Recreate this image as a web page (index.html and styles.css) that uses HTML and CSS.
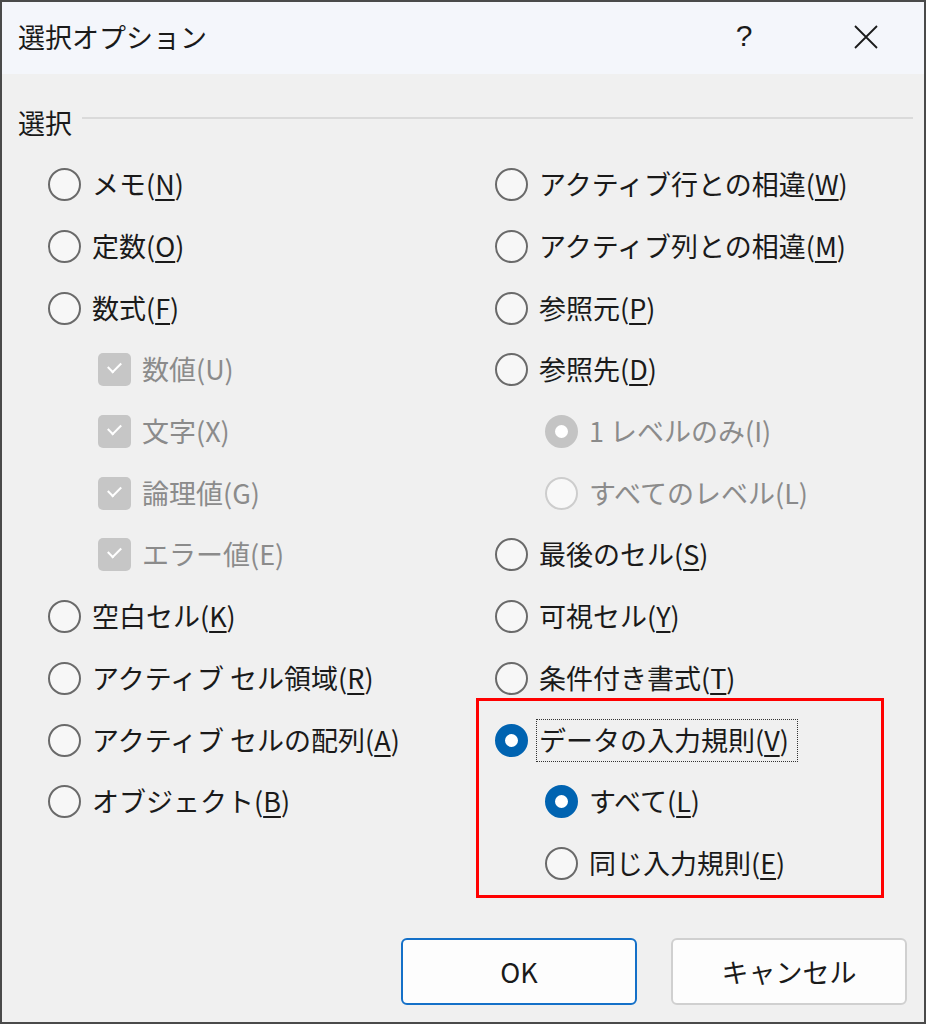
FILE: index.html
```html
<!DOCTYPE html>
<html lang="ja">
<head>
    <meta charset="UTF-8">
    <title>選択オプション</title>
    <link rel="stylesheet" href="styles.css">
</head>
<body>
    <div class="dialog">
        <!-- タイトルバー -->
        <div class="titlebar">
            <span class="title">選択オプション</span>
            <span class="tb-btn help">?</span>
            <span class="tb-btn close">
                <svg width="26" height="26" viewBox="0 0 26 26"><path d="M2 2 L24 24 M24 2 L2 24" stroke="#1a1a1a" stroke-width="1.8" fill="none"/></svg>
            </span>
        </div>

        <div class="content">
            <div class="group-head">
                <span>選択</span>
                <div class="group-line"></div>
            </div>

            <div class="columns">
                <div class="col">
                    <div class="row"><span class="radio"></span><span class="label">メモ(<u>N</u>)</span></div>
                    <div class="row"><span class="radio"></span><span class="label">定数(<u>O</u>)</span></div>
                    <div class="row"><span class="radio"></span><span class="label">数式(<u>F</u>)</span></div>
                    <div class="row sub disabled"><span class="check"></span><span class="label">数値(U)</span></div>
                    <div class="row sub disabled"><span class="check"></span><span class="label">文字(X)</span></div>
                    <div class="row sub disabled"><span class="check"></span><span class="label">論理値(G)</span></div>
                    <div class="row sub disabled"><span class="check"></span><span class="label">エラー値(E)</span></div>
                    <div class="row"><span class="radio"></span><span class="label">空白セル(<u>K</u>)</span></div>
                    <div class="row"><span class="radio"></span><span class="label">アクティブ セル領域(<u>R</u>)</span></div>
                    <div class="row"><span class="radio"></span><span class="label">アクティブ セルの配列(<u>A</u>)</span></div>
                    <div class="row"><span class="radio"></span><span class="label">オブジェクト(<u>B</u>)</span></div>
                </div>
                <div class="col">
                    <div class="row"><span class="radio"></span><span class="label">アクティブ行との相違(<u>W</u>)</span></div>
                    <div class="row"><span class="radio"></span><span class="label">アクティブ列との相違(<u>M</u>)</span></div>
                    <div class="row"><span class="radio"></span><span class="label">参照元(<u>P</u>)</span></div>
                    <div class="row"><span class="radio"></span><span class="label">参照先(<u>D</u>)</span></div>
                    <div class="row sub disabled"><span class="radio on"></span><span class="label">1 レベルのみ(I)</span></div>
                    <div class="row sub disabled"><span class="radio"></span><span class="label">すべてのレベル(L)</span></div>
                    <div class="row"><span class="radio"></span><span class="label">最後のセル(<u>S</u>)</span></div>
                    <div class="row"><span class="radio"></span><span class="label">可視セル(<u>Y</u>)</span></div>
                    <div class="row"><span class="radio"></span><span class="label">条件付き書式(<u>T</u>)</span></div>
                    <div class="highlight">
                        <div class="row"><span class="radio on"></span><span class="label focus">データの入力規則(<u>V</u>)</span></div>
                        <div class="row sub"><span class="radio on"></span><span class="label">すべて(<u>L</u>)</span></div>
                        <div class="row sub"><span class="radio"></span><span class="label">同じ入力規則(<u>E</u>)</span></div>
                    </div>
                </div>
            </div>
        </div>

        <div class="footer">
            <button class="btn primary">OK</button>
            <button class="btn">キャンセル</button>
        </div>
    </div>
</body>
</html>
```

FILE: styles.css
```css
* {
    box-sizing: border-box;
    margin: 0;
    padding: 0;
}

body {
    font-family: "Noto Sans CJK JP", "Noto Sans", sans-serif;
    background: #f0f0f0;
}

/* ダイアログ本体 */
.dialog {
    width: 926px;
    height: 1024px;
    border: 2px solid #4a4a4a;
    background: #f0f0f0;
    display: flex;
    flex-direction: column;
}

/* タイトルバー */
.titlebar {
    height: 72px;
    background: #f4f6fb;
    display: flex;
    align-items: center;
    padding: 0 28px 0 16px;
}

.title {
    font-size: 27px;
    color: #1a1a1a;
    line-height: 1;
    margin-top: -4px;
}

.tb-btn {
    width: 60px;
    display: flex;
    justify-content: center;
    align-items: center;
    color: #1a1a1a;
}

.help {
    margin-left: auto;
    margin-right: 62px;
    font-size: 30px;
    font-family: "Liberation Sans", sans-serif;
    margin-top: -4px;
}

.close {
    margin-top: -2px;
}

/* 選択グループ */
.content {
    padding: 0 0 0 46px;
    flex: 1;
}

.group-head {
    display: flex;
    align-items: center;
    height: 48px;
    margin: 24px 0 8px -30px;
    font-size: 27px;
    color: #1a1a1a;
}

.group-line {
    flex: 1;
    height: 2px;
    background: #dadada;
    margin: -8px 11px 0 10px;
}

.columns {
    display: grid;
    grid-template-columns: 447px 1fr;
}

.row {
    height: 61.7px;
    display: flex;
    align-items: center;
    font-size: 27px;
    color: #1a1a1a;
}

.row.sub {
    padding-left: 50px;
}

.label {
    margin-left: 11px;
    line-height: 1;
    padding: 1px 0 3px;
}

.label u {
    text-decoration-thickness: 2px;
    text-underline-offset: 4px;
}

.disabled .label {
    color: #8b8b8b;
}

/* ラジオボタン */
.radio {
    width: 33px;
    height: 33px;
    border-radius: 50%;
    border: 2px solid #6a6a6a;
    background: #f7f7f7;
    flex-shrink: 0;
}

.radio.on {
    border: 10px solid #0063b1;
    background: #fff;
}

.disabled .radio {
    border-color: #cdcdcd;
    background: #f8f8f8;
}

.disabled .radio.on {
    border: 10px solid #c4c4c4;
    background: #fff;
}

/* チェックボックス */
.check {
    width: 33px;
    height: 33px;
    border-radius: 5px;
    background: #c6c6c6;
    flex-shrink: 0;
    position: relative;
}

.check::after {
    content: "";
    position: absolute;
    left: 10px;
    top: 9px;
    width: 11px;
    height: 6px;
    border-left: 2px solid #fff;
    border-bottom: 2px solid #fff;
    transform: rotate(-45deg);
}

/* フォーカス枠と強調枠 */
.focus {
    outline: 1.5px dotted #333;
    outline-offset: 0;
    padding: 6px 8px 8px 2px;
    margin-left: 9px;
}

.highlight {
    border: 3px solid #ff0000;
    width: 408px;
    margin: -11px 0 0 -19px;
    padding: 8px 0 1px 16px;
}

/* ボタン */
.footer {
    display: flex;
    justify-content: flex-end;
    gap: 34px;
    padding: 0 17px 17px 0;
}

.btn {
    width: 236px;
    height: 67px;
    background: #fdfdfd;
    border: 2px solid #d0d0d0;
    border-radius: 6px;
    font-family: "Noto Sans CJK JP", sans-serif;
    font-size: 27px;
    color: #1a1a1a;
}

.btn.primary {
    border-color: #1470c8;
}
```
